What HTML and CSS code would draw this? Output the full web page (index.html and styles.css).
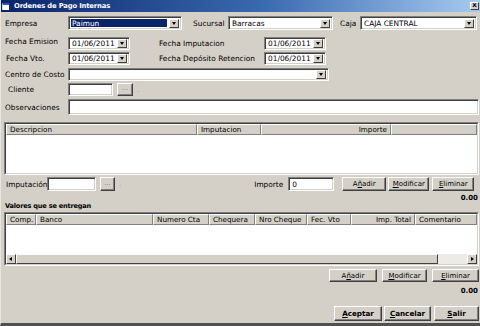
FILE: index.html
```html
<!DOCTYPE html>
<html>
<head>
<meta charset="utf-8">
<link rel="stylesheet" href="styles.css">
</head>
<body>
<div class="win">
  <div class="titlebar">
    <span class="ticon"></span>
    <span class="ttext">Ordenes de Pago Internas</span>
    <span class="tclose">x</span>
  </div>
  <div class="content">
    <div class="row r1">
      <span class="lbl w64">Empresa</span>
      <span class="field sel hl w114"><span class="val">Paimun</span><span class="dd"></span></span>
      <span class="lbl ml10 w36">Sucursal</span>
      <span class="field sel w105"><span class="val">Barracas</span><span class="dd"></span></span>
      <span class="lbl ml6 w21">Caja</span>
      <span class="field sel w117"><span class="val">CAJA CENTRAL</span><span class="dd"></span></span>
    </div>
    <div class="row r2">
      <span class="lbl w64 up">Fecha Emision</span>
      <span class="field sel w62"><span class="val">01/06/2011</span><span class="dd"></span></span>
      <span class="lbl ml28 w106">Fecha Imputacion</span>
      <span class="field sel w62"><span class="val">01/06/2011</span><span class="dd"></span></span>
    </div>
    <div class="row r3">
      <span class="lbl w64 pl1">Fecha Vto.</span>
      <span class="field sel w62"><span class="val">01/06/2011</span><span class="dd"></span></span>
      <span class="lbl ml28 w106">Fecha Depósito Retencion</span>
      <span class="field sel w62"><span class="val">01/06/2011</span><span class="dd"></span></span>
    </div>
    <div class="row r4">
      <span class="lbl w64">Centro de Costo</span>
      <span class="field sel w261"><span class="val"></span><span class="dd"></span></span>
    </div>
    <div class="row r5">
      <span class="lbl w64 pl4">Cliente</span>
      <span class="field w45"></span>
      <span class="btn dots ml4 w16">...</span>
      <span class="tick">.</span>
    </div>
    <div class="row r6">
      <span class="lbl w64">Observaciones</span>
      <span class="field grow"></span>
    </div>

    <div class="grid g1">
      <div class="gin">
        <div class="ghead">
          <span class="hc" style="width:191px">Descripcion</span>
          <span class="hc" style="width:64px">Imputacion</span>
          <span class="hc right" style="width:130px">Importe</span>
          <span class="hc last"></span>
        </div>
      </div>
    </div>

    <div class="row r7">
      <span class="lbl w43 pl2">Imputación</span>
      <span class="field w49"></span>
      <span class="btn dots ml4 w15">...</span>
      <span class="tick ml5">.</span>
      <span class="lbl imp">Importe</span>
      <span class="field w46"><span class="val">0</span></span>
      <span class="btn ml8 w44">A<u>ñ</u>adir</span>
      <span class="btn ml2 w41"><u>M</u>odificar</span>
      <span class="btn ml3 w42"><u>E</u>liminar</span>
    </div>
    <div class="total t1">0.00</div>
    <div class="section">Valores que se entregan</div>

    <div class="grid g2">
      <div class="gin">
        <div class="ghead">
          <span class="hc" style="width:30px">Comp.</span>
          <span class="hc" style="width:117px">Banco</span>
          <span class="hc" style="width:56px">Numero Cta</span>
          <span class="hc" style="width:46px">Chequera</span>
          <span class="hc" style="width:52px">Nro Cheque</span>
          <span class="hc" style="width:44px">Fec. Vto</span>
          <span class="hc right" style="width:64px">Imp. Total</span>
          <span class="hc last">Comentario</span>
        </div>
        <div class="gbody"></div>
        <div class="hscroll">
          <span class="sbtn"><span class="arl"></span></span>
          <span class="thumb"></span>
          <span class="track"></span>
          <span class="sbtn"><span class="arr"></span></span>
        </div>
      </div>
    </div>

    <div class="row r8">
      <span class="btn w48">A<u>ñ</u>adir</span>
      <span class="btn ml5 w45"><u>M</u>odificar</span>
      <span class="btn ml5 w47"><u>E</u>liminar</span>
    </div>
    <div class="total t2">0.00</div>

    <div class="row r9">
      <span class="btn bold w48"><u>A</u>ceptar</span>
      <span class="btn bold ml2 w47"><u>C</u>ancelar</span>
      <span class="btn bold ml3 w45"><u>S</u>alir</span>
    </div>
  </div>
</div>
</body>
</html>
```

FILE: styles.css
```css
* { box-sizing: border-box; }
html, body { margin: 0; padding: 0; }
body {
  width: 480px;
  height: 326px;
  overflow: hidden;
  background: #d4d0c8;
  font-family: "DejaVu Sans", Verdana, sans-serif;
  font-size: 7.4px;
  color: #000;
}
.win {
  width: 480px;
  height: 326px;
  display: flex;
  flex-direction: column;
  border-bottom: 3px solid #505050;
  border-left: 1px solid #e8e6e0;
}
.titlebar {
  height: 12px;
  flex: none;
  display: flex;
  align-items: center;
  background: linear-gradient(to right, #0a246a 0%, #3a6ab0 55%, #a6caf0 100%);
  position: relative;
}
.ticon {
  width: 7px;
  height: 7px;
  margin-left: 1px;
  background: #fff;
  border-top: 2px solid #2a5ab8;
  border-left: 1px solid #cfd8ea;
}
.ttext {
  margin-left: 5px;
  color: #fff;
  font-weight: bold;
  font-size: 6.8px;
  letter-spacing: -0.15px;
}
.tclose {
  margin-left: auto;
  margin-right: 1px;
  width: 9px;
  height: 8px;
  background: #d4d0c8;
  border: 1px solid;
  border-color: #fff #404040 #404040 #fff;
  font-weight: bold;
  font-size: 7px;
  line-height: 5px;
  text-align: center;
}
.content {
  flex: 1;
  display: flex;
  flex-direction: column;
  padding: 0 1px 0 3px;
}
.row {
  display: flex;
  align-items: center;
  flex: none;
}
.r1 { margin-top: 4px; height: 14px; }
.r2 { margin-top: 7px; height: 13px; }
.r3 { margin-top: 2px; height: 13px; }
.r4 { margin-top: 3px; height: 13px; }
.r5 { margin-top: 2px; height: 13px; }
.r6 { margin-top: 3px; height: 16px; }
.r7 { margin-top: 2px; height: 14px; }
.r8 { margin-top: 3px; height: 13px; justify-content: flex-end; }
.r9 { margin-top: 11px; height: 15px; justify-content: flex-end; }

.lbl { white-space: nowrap; flex: none; padding-left: 1px; }
.lbl.up { align-self: flex-start; margin-top: 0; }
.pl1 { padding-left: 2px; }
.pl2 { padding-left: 2px; }
.pl4 { padding-left: 4px; }
.imp { margin-left: 132px; width: 35px; }

.w15 { width: 15px; } .w16 { width: 16px; } .w21 { width: 21px; }
.w36 { width: 36px; } .w41 { width: 41px; } .w42 { width: 42px; }
.w43 { width: 43px; } .w44 { width: 44px; } .w45 { width: 45px; }
.w46 { width: 46px; } .w47 { width: 47px; } .w48 { width: 48px; }
.w49 { width: 49px; } .w62 { width: 62px; } .w64 { width: 64px; }
.w105 { width: 105px; } .w106 { width: 106px; } .w114 { width: 114px; }
.w117 { width: 117px; } .w261 { width: 261px; }
.ml2 { margin-left: 2px; } .ml3 { margin-left: 3px; } .ml4 { margin-left: 4px; }
.ml5 { margin-left: 5px; } .ml6 { margin-left: 6px; } .ml8 { margin-left: 8px; }
.ml10 { margin-left: 10px; } .ml28 { margin-left: 28px; }
.grow { flex: 1; }

.field {
  flex: none;
  height: 100%;
  display: flex;
  align-items: center;
  background: #fff;
  border: 1px solid;
  border-color: #808080 #ffffff #ffffff #808080;
  box-shadow: inset 1px 1px 0 #404040, inset -1px -1px 0 #d4d0c8;
  padding: 1px 1px 1px 2px;
  white-space: nowrap;
  overflow: hidden;
}
.field.grow { flex: 1; }
.field .val { flex: 1; padding-left: 1px; line-height: 9px; }
.field.hl .val {
  background: #0a246a;
  color: #fff;
  align-self: stretch;
  display: flex;
  align-items: center;
  margin: 1px 1px 1px 0;
}
.dd {
  flex: none;
  width: 10px;
  height: 9px;
  margin-left: 1px;
  margin-right: 1px;
  background: #d4d0c8;
  border: 1px solid;
  border-color: #fff #404040 #404040 #fff;
  position: relative;
}
.dd::after {
  content: "";
  position: absolute;
  left: 2px;
  top: 2px;
  border-left: 2.5px solid transparent;
  border-right: 2.5px solid transparent;
  border-top: 3px solid #000;
}

.btn {
  flex: none;
  height: 100%;
  display: flex;
  align-items: center;
  justify-content: center;
  background: #d4d0c8;
  border: 1px solid;
  border-color: #fff #404040 #404040 #fff;
  box-shadow: inset -1px -1px 0 #808080;
  font-size: 7px;
  white-space: nowrap;
}
.btn.bold { font-weight: bold; font-size: 7.2px; }
.btn.dots { color: #808080; font-size: 7px; line-height: 1; padding-bottom: 2px; }
.tick { color: #9a9890; margin-left: 4px; font-size: 7px; }

.grid {
  flex: none;
  border: 1px solid;
  border-color: #808080 #fff #fff #808080;
  width: 475px;
}
.g1 { margin-top: 7px; height: 53px; }
.g2 { margin-top: 1px; height: 54px; }
.gin {
  height: 100%;
  background: #fff;
  border: 1px solid;
  border-color: #404040 #d4d0c8 #d4d0c8 #404040;
  display: flex;
  flex-direction: column;
}
.ghead { display: flex; height: 11px; flex: none; }
.hc {
  flex: none;
  height: 11px;
  background: #d4d0c8;
  border: 1px solid;
  border-color: #fff #808080 #808080 #fff;
  padding: 0 3px;
  font-size: 7.2px;
  line-height: 9px;
  white-space: nowrap;
  overflow: hidden;
}
.hc.right { text-align: right; }
.hc.last { flex: 1; }
.gbody { flex: 1; }
.hscroll { height: 10px; flex: none; display: flex; }
.sbtn {
  width: 10px;
  height: 10px;
  background: #d4d0c8;
  border: 1px solid;
  border-color: #fff #404040 #404040 #fff;
  position: relative;
  flex: none;
}
.arl, .arr { position: absolute; top: 2px; width: 0; height: 0; border-top: 2.5px solid transparent; border-bottom: 2.5px solid transparent; }
.arl { left: 2px; border-right: 3px solid #000; }
.arr { left: 3px; border-left: 3px solid #000; }
.thumb {
  width: 422px;
  height: 10px;
  background: #d4d0c8;
  border: 1px solid;
  border-color: #fff #404040 #404040 #fff;
  flex: none;
}
.track { flex: 1; background: #ecebe6; }

.total {
  flex: none;
  text-align: right;
  font-weight: bold;
  font-size: 7px;
  height: 8px;
  line-height: 8px;
  padding-right: 1px;
}
.t1 { margin-top: 3px; }
.t2 { margin-top: 5px; }
.section {
  flex: none;
  font-weight: bold;
  font-size: 6.6px;
  letter-spacing: -0.2px;
  height: 9px;
  line-height: 9px;
  padding-left: 1px;
}
```
